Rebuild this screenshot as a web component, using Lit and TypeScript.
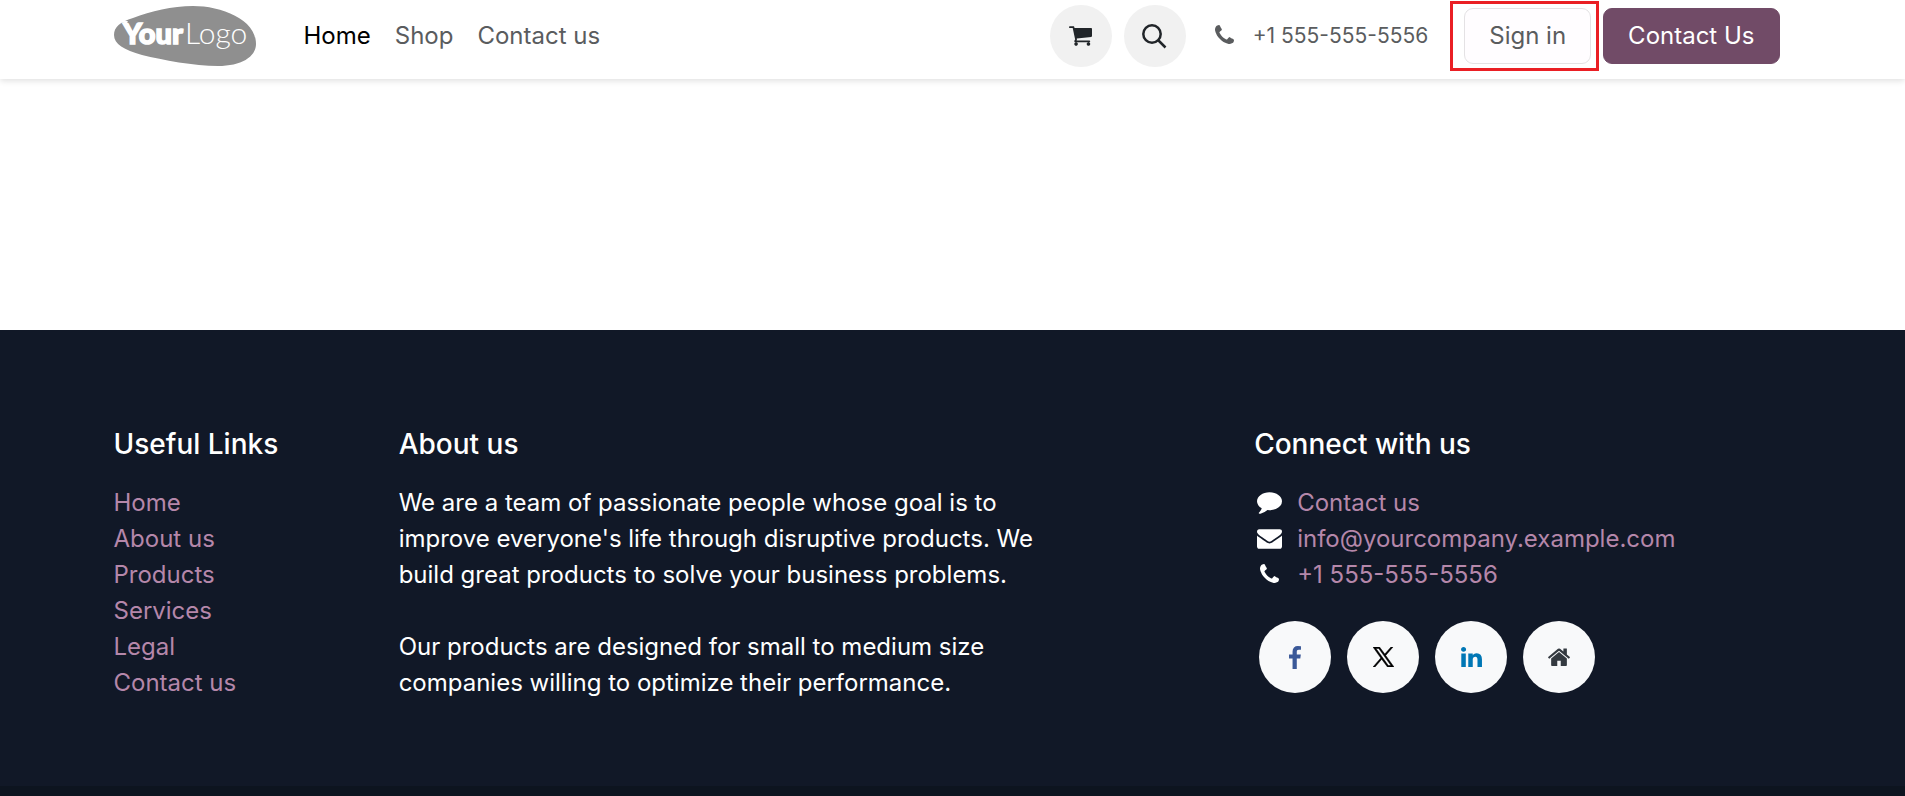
import { LitElement, html, svg, css } from "lit";
import { customElement } from "lit/decorators.js";

const icon = (viewBox: string, cls: string, body: unknown) =>
  html`<svg class="icon ${cls}" viewBox=${viewBox} aria-hidden="true">${body}</svg>`;

const phone = svg`<path d="M1408 1240q0 27-10 70.500t-21 68.500q-21 50-122 106-94 51-186 51-27 0-53-3.500t-57.500-12.500-47-14.500-55.500-20.500-49-18q-98-35-175-83-127-79-264-216t-216-264q-48-77-83-175-3-9-18-49t-20.500-55.500-14.500-47-12.500-57.500-3.500-53q0-92 51-186 56-101 106-122 25-11 68.500-21t70.500-10q14 0 21 3 18 6 53 76 11 19 30 54t35 63.500 31 53.500q3 4 17.500 25t21.500 35.500 7 28.500q0 20-28.500 50t-62 55-62 53-28.500 46q0 9 5 22.500t8.500 20.500 14 24 11.500 19q76 137 174 235t235 174q2 1 19 11.500t24 14 20.500 8.500 22.500 5q18 0 46-28.500t53-62 55-62 50-28.500q14 0 28.500 7t35.500 21.500 25 17.500q25 15 53.500 31t63.500 35 54 30q70 35 76 53 3 7 3 21z"/>`;

const footerLinks = ["Home", "About us", "Products", "Services", "Legal", "Contact us"];

@customElement("app-root")
export class AppRoot extends LitElement {
  static styles = css`
    :host {
      display: flex;
      flex-direction: column;
      min-height: 100vh;
      box-sizing: border-box;
      background: #fff;
      color: #212529;
      font: 400 24px/36px Inter, "Open Sans", sans-serif;
    }
    * { box-sizing: border-box; }
    a { text-decoration: none; }
    .icon { display: block; fill: currentColor; }
    .container {
      width: 100%;
      max-width: 1722px;
      margin: 0 auto;
      padding: 0 34px 0 22px;
    }
    .header {
      height: 79px;
      box-shadow: 0 2px 6px rgba(0, 0, 0, 0.12);
    }
    .bar {
      display: flex;
      align-items: center;
      height: 72px;
    }
    .logo { display: block; margin-right: 35px; }
    .logo svg { display: block; width: 143px; height: 61px; }
    .nav { display: flex; flex: 1; }
    .nav a { padding: 0 12px; color: #5a5c5e; }
    .nav .current { color: #000; }
    .round {
      display: grid;
      place-items: center;
      width: 62px;
      height: 62px;
      margin-right: 12px;
      padding: 0;
      border: 0;
      border-radius: 50%;
      background: #f1f1f1;
      color: #212529;
    }
    .cart { width: 23px; height: 20px; }
    .search { width: 25px; height: 25px; }
    .call {
      display: flex;
      align-items: center;
      gap: 19px;
      margin: 0 22px 0 17px;
      color: #5a5c5e;
      font-size: 21px;
    }
    .phone { width: 19px; height: 19px; margin-bottom: 3px; }
    .highlight {
      display: flex;
      align-items: center;
      height: 70px;
      margin-right: 4px;
      padding: 0 5px 0 11px;
      border: 3px solid #ea1f24;
    }
    .button {
      display: flex;
      align-items: center;
      height: 56px;
      padding: 0 24px;
      border: 1px solid #e4e2e4;
      border-radius: 9px;
      background: #fffdff;
      color: #5a5c5e;
    }
    .primary { border-color: #714b67; background: #714b67; color: #fff; }
    .main { height: 251px; }
    .footer { flex: 1; background: #111827; color: #fff; display: flex; flex-direction: column; }
    .columns {
      display: grid;
      grid-template-columns: repeat(12, minmax(0, 1fr));
      column-gap: 45px;
      padding-top: 95px;
      padding-bottom: 48px;
      flex: 1;
    }
    .links { grid-column: 1 / span 2; }
    .about { grid-column: 3 / span 5; }
    .connect { grid-column: 9 / span 4; }
    h5 { margin: 0 0 22px; font: 500 28px/38px Inter, sans-serif; }
    p { margin: 0 0 36px; }
    ul { margin: 0; padding: 0; list-style: none; }
    .footer li a { color: #b587aa; }
    .contact li { display: flex; align-items: center; gap: 12px; }
    .slot { display: grid; place-items: center; width: 31px; }
    .comment { width: 25px; height: 22px; }
    .mail { width: 25px; height: 20px; }
    .social { display: flex; gap: 16px; padding: 28px 5px 0; }
    .social a {
      display: grid;
      place-items: center;
      width: 72px;
      height: 72px;
      border-radius: 50%;
      background: #f8f9fa;
    }
    .social .fb { color: #3b5998; }
    .social .x { color: #000; }
    .social .in { color: #0077b5; }
    .social .house { color: #343a40; }
    .i-fb { width: 12px; height: 23px; }
    .i-x { width: 21px; height: 20px; }
    .i-in { width: 21px; height: 20px; }
    .i-house { width: 22px; height: 18px; }
    .copyright { height: 10px; background: #0d141f; }
  `;

  render() {
    return html`
      <header class="header">
        <div class="container bar">
          <a class="logo" href="#" aria-label="Your Logo">
            <svg viewBox="0 0 143 61">
              <path fill="#8f8f8f" d="M0 29C0 21 6 16 19 12C37 5 58 0 79 0C107 0 142 13 142 38C142 51 127 60 104 60C80 60 49 54 28 49C10 44 0 38 0 29Z"/>
              <path fill="#fff" d="M7 15H14L12 18Z"/>
              <text x="9" y="38" fill="#fff" stroke="#fff" stroke-width="1.500" font-family="Lato, sans-serif" font-weight="900" font-size="29">Your</text>
              <text x="71" y="38" fill="#fff" font-family="Lato, sans-serif" font-weight="300" font-size="30">Logo</text>
            </svg>
          </a>
          <nav class="nav">
            <a class="current" href="#">Home</a><a href="#">Shop</a><a href="#">Contact us</a>
          </nav>
          <a class="round" href="#" aria-label="Cart">${icon("0 0 1664 1408", "cart", svg`<path d="M640 1280q0 52-38 90t-90 38-90-38-38-90 38-90 90-38 90 38 38 90zm896 0q0 52-38 90t-90 38-90-38-38-90 38-90 90-38 90 38 38 90zm128-1088v512q0 24-16.500 42.500t-40.500 21.500l-1044 122q13 60 13 70 0 16-24 64h920q26 0 45 19t19 45-19 45-45 19H448q-26 0-45-19t-19-45q0-11 8-31.500t16-36 21.500-40 15.500-29.500L268 128H64q-26 0-45-19T0 64t19-45T64 0h256q16 0 28.500 6.500T368 22t13 24.500 8 26 5.500 29.500 4.500 26h1201q26 0 45 19t19 45z"/>`)}</a>
          <button class="round" type="button" aria-label="Search">${icon("0 0 25 25", "search", svg`<g fill="none" stroke="currentColor" stroke-width="2.500"><circle cx="10" cy="10" r="8.700"/><path d="M16.500 16.500L23.500 23.500"/></g>`)}</button>
          <a class="call" href="tel:+15555555556">${icon("0 128 1408 1408", "phone", phone)}<span>+1 555-555-5556</span></a>
          <div class="highlight"><a class="button" href="#">Sign in</a></div>
          <a class="button primary" href="#">Contact Us</a>
        </div>
      </header>
      <main class="main"></main>
      <footer class="footer">
        <div class="container columns">
          <section class="links">
            <h5>Useful Links</h5>
            <ul>${footerLinks.map((l) => html`<li><a href="#">${l}</a></li>`)}</ul>
          </section>
          <section class="about">
            <h5>About us</h5>
            <p>We are a team of passionate people whose goal is to improve everyone's life through disruptive products. We build great products to solve your business problems.</p>
            <p>Our products are designed for small to medium size companies willing to optimize their performance.</p>
          </section>
          <section class="connect">
            <h5>Connect with us</h5>
            <ul class="contact">
              <li><span class="slot">${icon("0 0 1792 1536", "comment", svg`<path d="M1792 640q0 174-120 321.500t-326 233-450 85.500q-70 0-145-8-198 175-460 242-49 14-114 22-17 2-30.500-9T129 1498v-1q-3-4-.5-12t2-10 4.500-9.500l6-9 7-8.500 8-9q7-8 31-34.500t34.500-38 31-39.500 32.500-51 27-59 26-76q-157-89-247.500-220T0 640q0-130 71-248.500T262 187 548 50.500 896 0t348 50.500T1530 187t191 204.500T1792 640z"/>`)}</span><a href="#">Contact us</a></li>
              <li><span class="slot">${icon("0 0 1792 1408", "mail", svg`<path d="M1792 454v794q0 66-47 113t-113 47H160q-66 0-113-47T0 1248V454q44 49 101 87 362 246 497 345 57 42 92.500 65.500t94.500 48 110 24.500h2q51 0 110-24.500t94.500-48T1194 886q170-123 498-345 57-39 100-87zm0-294q0 79-49 151t-122 123q-376 261-468 325-10 7-42.500 30.500t-54 38-52 32.500-57.500 27-50 9h-2q-23 0-50-9t-57.500-27-52-32.500-54-38T639 759q-91-64-262-182.500T172 434q-62-42-117-115.500T0 182q0-78 41.500-130T160 0h1472q65 0 112.500 47t47.500 113z"/>`)}</span><a href="#">info@yourcompany.example.com</a></li>
              <li><span class="slot">${icon("0 128 1408 1408", "phone", phone)}</span><a href="#">+1 555-555-5556</a></li>
            </ul>
            <div class="social">
              <a class="fb" href="#" aria-label="Facebook">${icon("95 0 864 1664", "i-fb", svg`<path d="M959 12v264H802q-86 0-116 36t-30 108v189h293l-39 296H656v759H350V905H95V609h255V391q0-186 104-288.500T731 0q147 0 228 12z"/>`)}</a>
              <a class="x" href="#" aria-label="X">${icon("0 0 21 20", "i-x", svg`<path stroke="currentColor" stroke-width=".500" fill-rule="evenodd" d="M0 0H6.500L11.800 7.100L18 0H20L12.700 8.400L21 20H14.500L8.700 12.200L2 20H0L7.800 11ZM3 1.500L15.300 18.500H18L5.800 1.500Z"/>`)}</a>
              <a class="in" href="#" aria-label="LinkedIn">${icon("0 0 1536 1468", "i-in", svg`<path d="M349 478v991H19V478h330zm21-306q1 73-50.500 122T184 343h-2q-82 0-132-49T0 172q0-74 51.500-122.500T186 1t133 48.500T370 172zm1166 729v568h-329V939q0-105-40.500-164.500T1040 715q-63 0-105.500 34.500T871 835q-11 30-11 81v553H531q2-399 2-647t-1-296l-1-48h329v144h-2q20-32 41-56t56.500-52 87-43.500T1157 455q171 0 275 113.500T1536 901z"/>`)}</a>
              <a class="house" href="#" aria-label="Website">${icon("25 230 1612 1306", "i-house", svg`<path d="M1408 992v480q0 26-19 45t-45 19H960v-384H704v384H320q-26 0-45-19t-19-45V992q0-1 .5-3t.5-3l575-474 575 474q1 2 1 6zm223-69l-62 74q-8 9-21 11h-3q-13 0-21-7L832 424l-692 577q-12 8-24 7-13-2-21-11l-62-74q-8-10-7-23.500T37 878l719-599q32-26 76-26t76 26l244 204V288q0-14 9-23t23-9h192q14 0 23 9t9 23v408l219 182q10 8 11 21.500t-7 23.500z"/>`)}</a>
            </div>
          </section>
        </div>
        <div class="copyright"></div>
      </footer>
    `;
  }
}
